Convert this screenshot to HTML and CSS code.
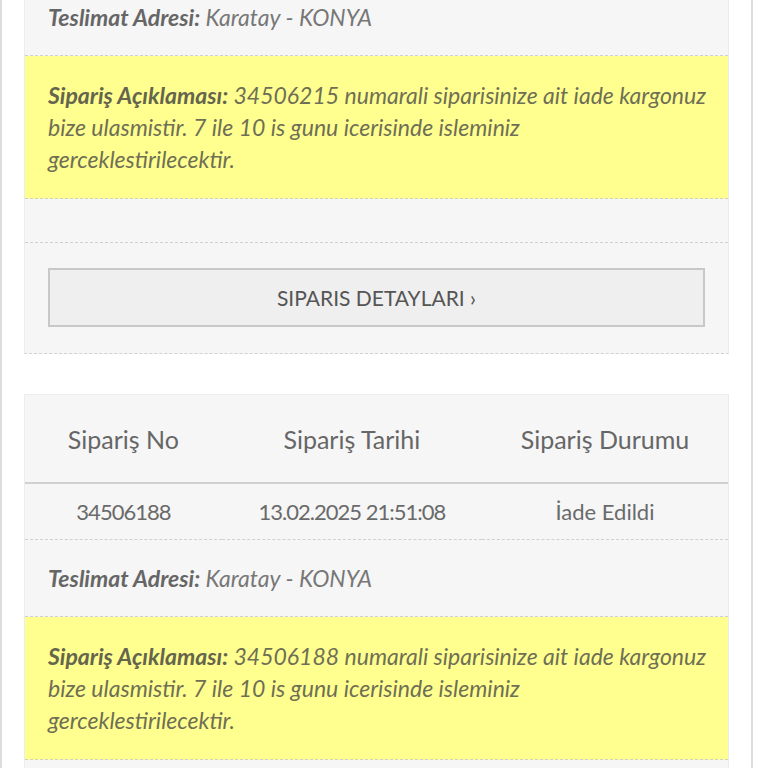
FILE: index.html
```html
<!DOCTYPE html>
<html lang="tr">
<head>
    <meta charset="UTF-8">
    <meta name="viewport" content="width=device-width, initial-scale=1.0">
    <title>Siparişlerim</title>
    <link rel="stylesheet" href="styles.css">
</head>
<body>

<div class="siparisListe">
    <div class="siparisKart">
        <table class="siparisTablo">
            <thead>
                <tr>
                    <th>Sipariş No</th>
                    <th>Sipariş Tarihi</th>
                    <th>Sipariş Durumu</th>
                </tr>
            </thead>
            <tbody>
                <tr>
                    <td class="sayi">34506215</td>
                    <td class="sayi">13.02.2025 21:58:12</td>
                    <td>İade Edildi</td>
                </tr>
            </tbody>
        </table>
        <div class="satir adres"><b>Teslimat Adresi:</b> Karatay - KONYA</div>
        <div class="satir aciklama"><b>Sipariş Açıklaması:</b> 34506215 numarali siparisinize ait iade kargonuz bize ulasmistir. 7 ile 10 is gunu icerisinde isleminiz<br>gerceklestirilecektir.</div>
        <div class="satir bos"></div>
        <div class="satir butonSatir">
            <button class="btn">SIPARIS DETAYLARI ›</button>
        </div>
    </div>

    <div class="siparisKart">
        <table class="siparisTablo">
            <thead>
                <tr>
                    <th>Sipariş No</th>
                    <th>Sipariş Tarihi</th>
                    <th>Sipariş Durumu</th>
                </tr>
            </thead>
            <tbody>
                <tr>
                    <td class="sayi">34506188</td>
                    <td class="sayi">13.02.2025 21:51:08</td>
                    <td>İade Edildi</td>
                </tr>
            </tbody>
        </table>
        <div class="satir adres"><b>Teslimat Adresi:</b> Karatay - KONYA</div>
        <div class="satir aciklama"><b>Sipariş Açıklaması:</b> 34506188 numarali siparisinize ait iade kargonuz bize ulasmistir. 7 ile 10 is gunu icerisinde isleminiz<br>gerceklestirilecektir.</div>
        <div class="satir bos"></div>
        <div class="satir butonSatir">
            <button class="btn">SIPARIS DETAYLARI ›</button>
        </div>
    </div>
</div>

</body>
</html>
```

FILE: styles.css
```css
body {
    font-family: 'Lato', sans-serif;
    margin: 0;
    padding: 0;
    color: #666;
    background-color: #fff;
    overflow: hidden;
}

/* sayfa kaydirilmis halde: ilk kartin ust kismi ekranin disinda */
.siparisListe {
    width: 705px;
    padding: 0 22px;
    margin-top: -167px;
    border-left: 2px solid #dcdcdc;
    border-right: 2px solid #dcdcdc;
    display: flex;
    flex-direction: column;
    gap: 40px;
}

.siparisKart {
    background-color: #f6f6f6;
    border: 1px solid #ececec;
    border-bottom: 1px dashed #d2d2d2;
}

.siparisTablo {
    width: 100%;
    border-collapse: collapse;
    table-layout: fixed;
}

.siparisTablo th:nth-child(1) { width: 28%; }
.siparisTablo th:nth-child(2) { width: 37%; }

.siparisTablo th {
    height: 87px;
    font-size: 25px;
    font-weight: 400;
    color: #666;
    border-bottom: 2px solid #d0d0d0;
    padding: 0;
}

.siparisTablo td {
    height: 55px;
    font-size: 22px;
    color: #6a6a6a;
    text-align: center;
    border-bottom: 1px dashed #d0d0d0;
    padding: 0;
}

.siparisTablo td.sayi {
    letter-spacing: -1px;
}

.satir {
    padding: 0 20px 0 23px;
    border-bottom: 1px dashed #d0d0d0;
    font-size: 23px;
    font-style: italic;
    color: #777;
}

.satir b {
    font-weight: 700;
    color: #666;
}

.adres {
    height: 76px;
    line-height: 76px;
}

.aciklama {
    background-color: #ffff8f;
    padding-top: 23px;
    padding-bottom: 23px;
    line-height: 32px;
    color: #6f6f55;
}

.aciklama b {
    color: #65654d;
}

.bos {
    height: 43px;
}

.butonSatir {
    padding: 25px 23px 26px;
    border-bottom: none;
}

.btn {
    width: 100%;
    height: 59px;
    background-color: #efefef;
    border: 2px solid #c8c8c8;
    font-family: 'Lato', sans-serif;
    font-size: 21px;
    color: #555;
    cursor: pointer;
}
```
